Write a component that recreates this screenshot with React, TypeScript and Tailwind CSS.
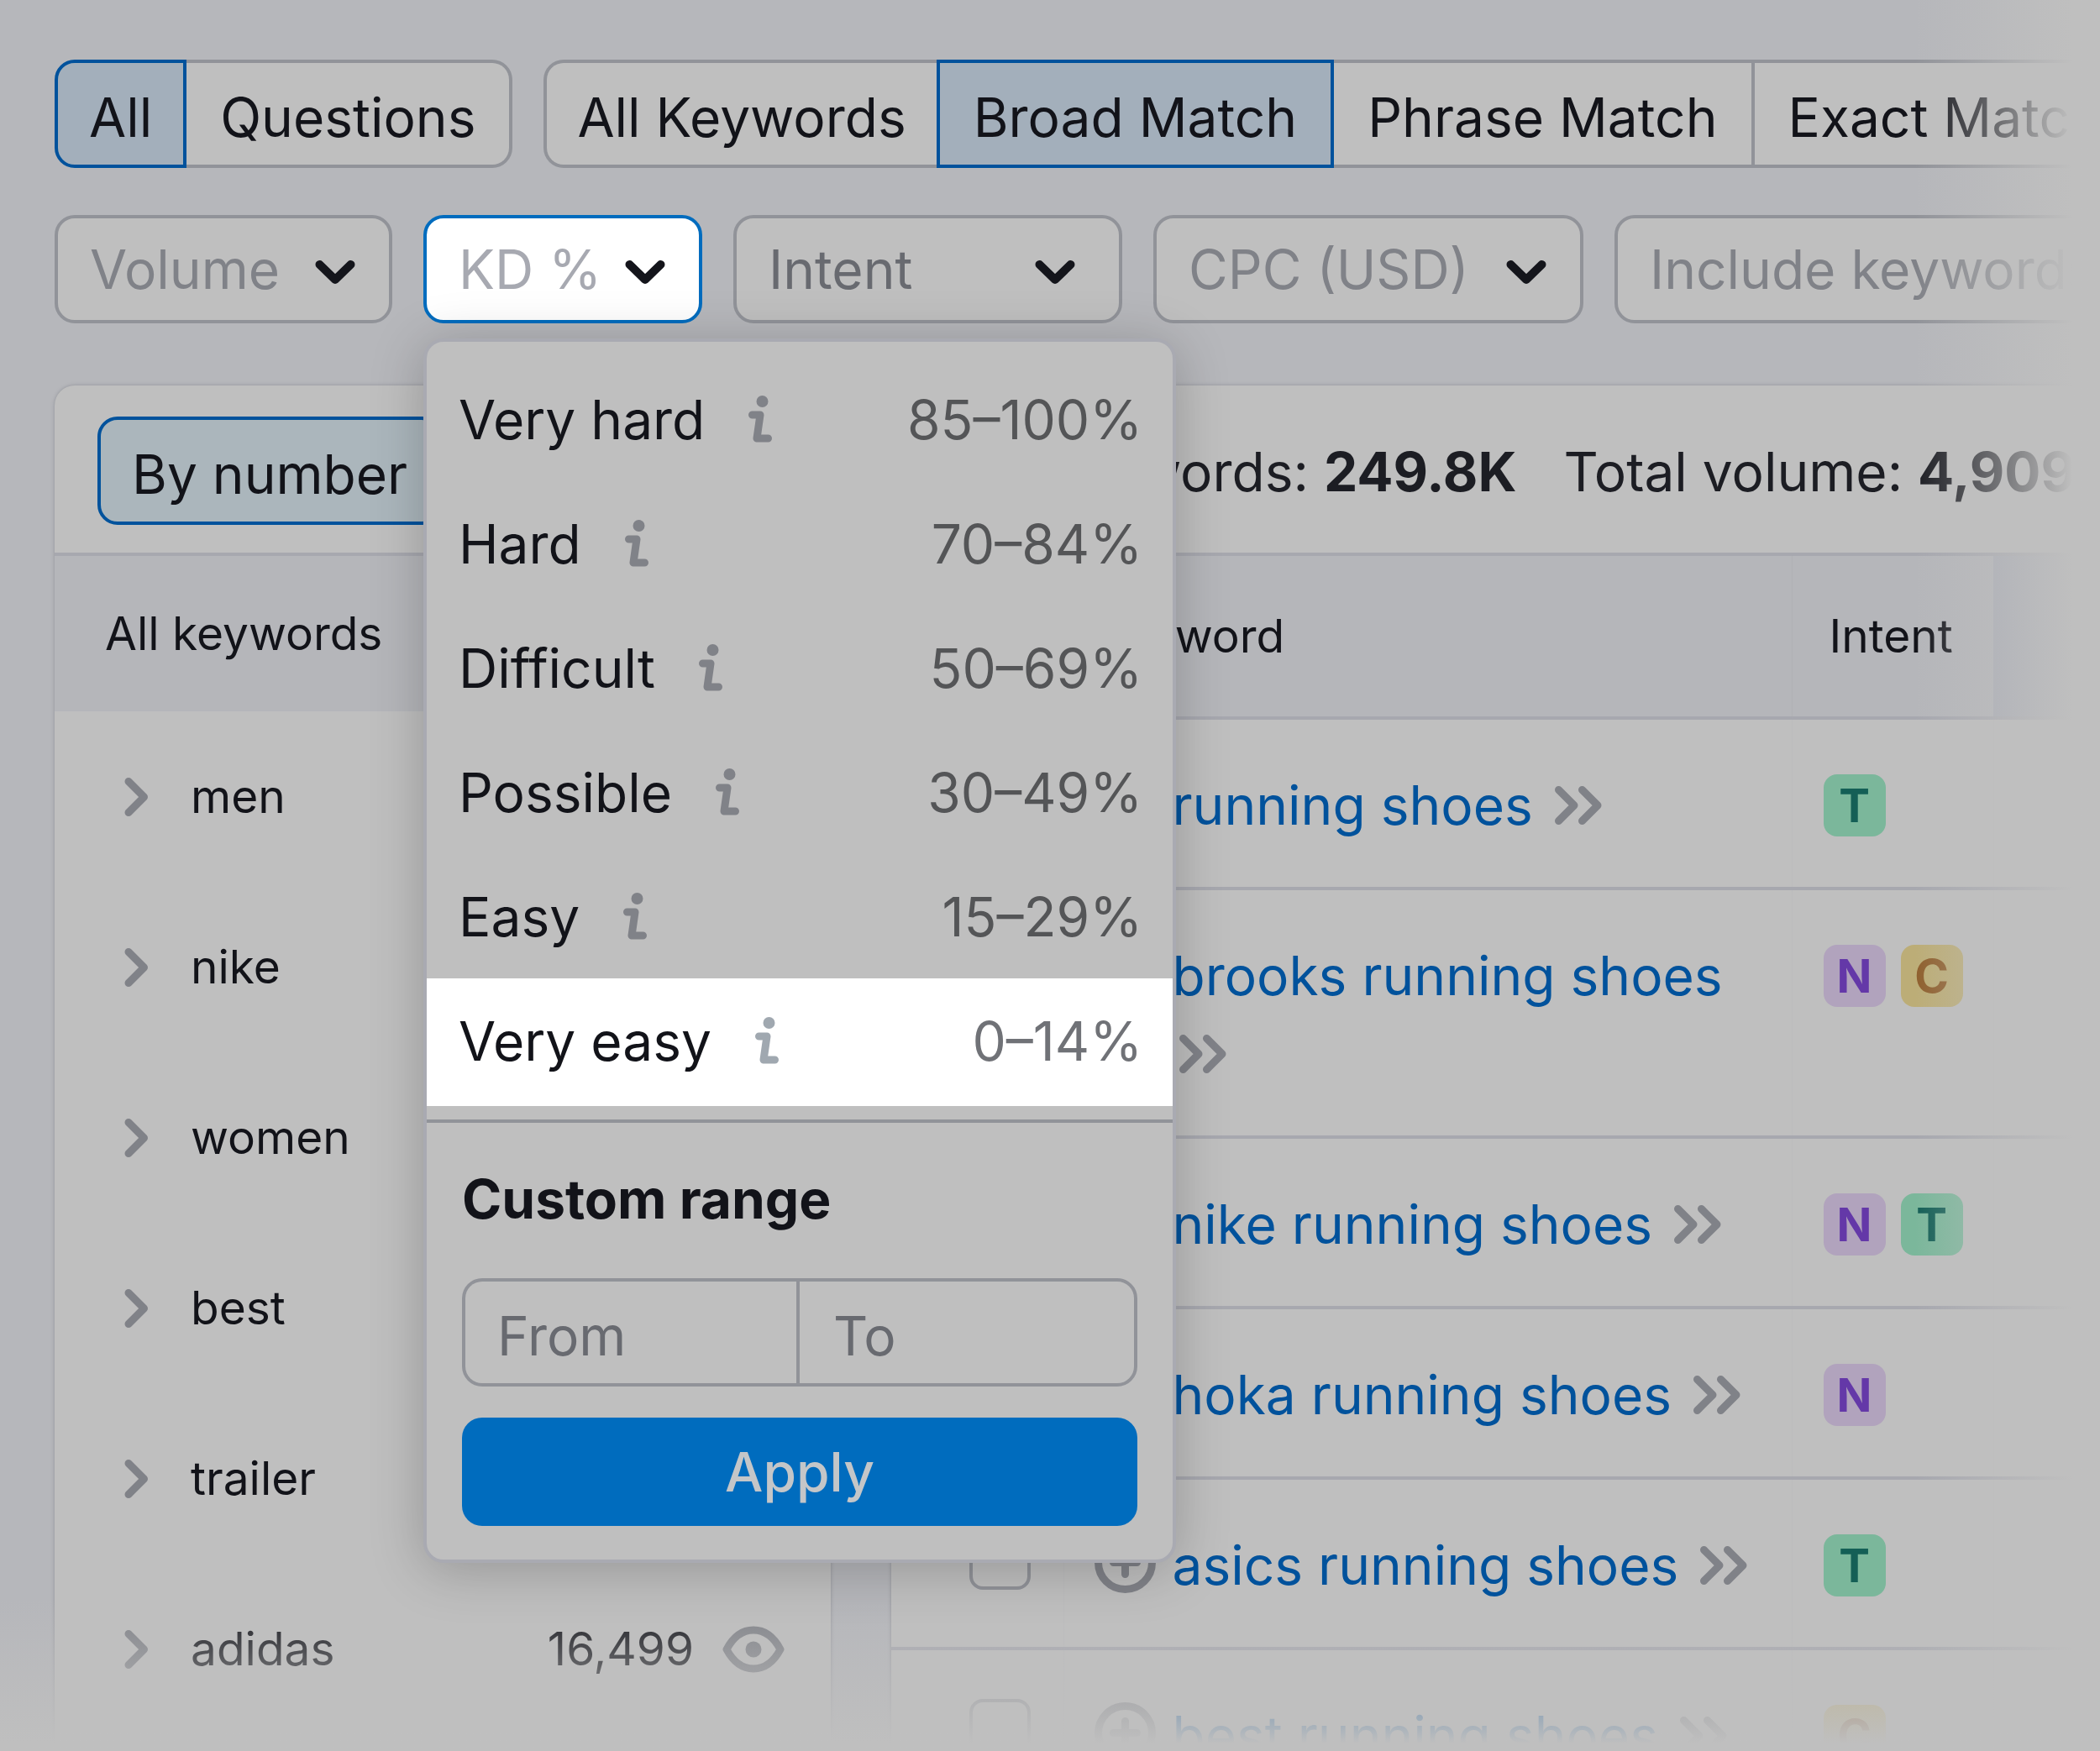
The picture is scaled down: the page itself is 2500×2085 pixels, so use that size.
import type { ReactNode } from "react";

const difficulties = [
  { label: "Very hard", range: "85–100%" },
  { label: "Hard", range: "70–84%" },
  { label: "Difficult", range: "50–69%" },
  { label: "Possible", range: "30–49%" },
  { label: "Easy", range: "15–29%" },
  { label: "Very easy", range: "0–14%", active: true },
];

const groups = [
  { name: "men" },
  { name: "nike" },
  { name: "women" },
  { name: "best" },
  { name: "trailer" },
  { name: "adidas", count: "16,499" },
];

const keywords = [
  { text: "running shoes", intents: ["T"] },
  { text: "brooks running shoes", intents: ["N", "C"] },
  { text: "nike running shoes", intents: ["N", "T"] },
  { text: "hoka running shoes", intents: ["N"] },
  { text: "asics running shoes", intents: ["T"] },
  { text: "best running shoes", intents: ["C"] },
];

const intentColors: Record<string, string> = {
  T: "bg-[#7bb79b] text-[#145f56]",
  N: "bg-[#b1a3bd] text-[#6438a8]",
  C: "bg-[#bcad77] text-[#8f602e]",
};

const ChevronDown = () => (
  <svg className="mt-1.5 w-12 h-7 shrink-0" viewBox="0 0 48 28" fill="none" stroke="#14151b" strokeWidth="10" strokeLinecap="round" strokeLinejoin="round">
    <path d="M5.500 5 24 23 42.500 5" />
  </svg>
);

const ChevronRight = () => (
  <svg className="w-7 h-12 shrink-0" viewBox="0 0 28 48" fill="none" stroke="#808288" strokeWidth="9" strokeLinecap="round" strokeLinejoin="round">
    <path d="M5 5.500 23.500 24 5 42.500" />
  </svg>
);

const DoubleChevron = () => (
  <svg className="ml-2 inline-block w-14 h-[46px] align-baseline" viewBox="0 0 56 46" fill="none" stroke="#808288" strokeWidth="9" strokeLinecap="round" strokeLinejoin="round">
    <path d="M4.500 4.500 23 23 4.500 41.500M32.500 4.500 51 23 32.500 41.500" />
  </svg>
);

const Info = () => (
  <svg className="w-7 h-14 shrink-0" viewBox="0 0 28 56">
    <circle cx="16.5" cy="7" r="7" fill="currentColor" />
    <path d="M4.500 23H14L10 51H23.500" fill="none" stroke="currentColor" strokeWidth="9" strokeLinecap="round" strokeLinejoin="round" />
  </svg>
);

const Eye = () => (
  <svg className="w-[74px] h-14 shrink-0" viewBox="0 0 74 56">
    <path d="M5 28C13 13 24 5 37 5S61 13 69 28C61 43 50 51 37 51S13 43 5 28Z" fill="none" stroke="#808288" strokeWidth="9" strokeLinejoin="round" />
    <circle cx="37" cy="28" r="9.500" fill="#808288" />
  </svg>
);

const PlusCircle = () => (
  <svg className="w-[73px] h-[73px] shrink-0" viewBox="0 0 73 73" fill="none" stroke="#808288" strokeWidth="9" strokeLinecap="round">
    <circle cx="36.5" cy="36.500" r="32" />
    <path d="M36.500 22.500v28M22.500 36.500h28" />
  </svg>
);

const Filter = ({ label, className }: { label: string; className: string }) => (
  <button className={`h-[129px] shrink-0 flex items-center justify-between rounded-3xl border-4 pl-[38px] whitespace-nowrap ${className}`}>
    {label}
    <ChevronDown />
  </button>
);

const Tab = ({ children, className }: { children: ReactNode; className: string }) => (
  <button className={`h-[129px] shrink-0 border-4 pt-2 whitespace-nowrap ${className}`}>{children}</button>
);

const KdPopup = () => (
  <div className="absolute left-0 top-full z-10 mt-[18px] w-[896px] rounded-3xl border-4 border-[#a9aab2] bg-[#bfbfbf] pt-[18px] pb-10 text-[#121319] shadow-[0_8px_64px_rgba(0,0,0,0.22)]">
    <ul>
      {difficulties.map((d) => (
        <li key={d.label}>
          <button
            className={`flex w-full items-center pl-[38px] pr-9 ${d.active ? "h-[152px] bg-white pb-1 text-[#a0a8b0]" : "h-[148px] text-[#808288]"}`}
          >
            <span className="text-[#121319]">{d.label}</span>
            <span className="ml-13">
              <Info />
            </span>
            <span className={`ml-auto ${d.active ? "text-[#707277]" : "text-[#545557]"}`}>{d.range}</span>
          </button>
        </li>
      ))}
    </ul>
    <div className="mt-4 border-t-4 border-[#919399] px-[42px] pt-11">
      <h2 className="font-bold">Custom range</h2>
      <div className="mt-12 flex">
        <input
          aria-label="From"
          placeholder="From"
          className="h-[129px] min-w-0 flex-1 rounded-l-3xl border-4 border-r-0 border-[#919399] px-[38px] pt-2 placeholder:text-[#686a70]"
        />
        <input
          aria-label="To"
          placeholder="To"
          className="h-[129px] min-w-0 flex-1 rounded-r-3xl border-4 border-[#919399] px-10 pt-2 placeholder:text-[#686a70]"
        />
      </div>
      <button className="mt-[37px] h-[129px] w-full rounded-3xl bg-[#006cbe] font-medium text-[#c4c6c8]">Apply</button>
    </div>
  </div>
);

const App = () => {
  return (
    <div className="relative h-screen overflow-hidden bg-[#b6b7bb] pl-[65px] pt-[71px] font-['Inter',sans-serif] text-[64px] leading-[93px] text-[#121319] [font-optical-sizing:none]">
      <div className="flex gap-[37px]">
        <div className="flex">
          <Tab className="rounded-l-3xl border-[#00529c] bg-[#a3afbb] px-[37px]">All</Tab>
          <Tab className="rounded-r-3xl border-l-0 border-[#919399] bg-[#bfbfbf] px-10">Questions</Tab>
        </div>
        <div className="flex">
          <Tab className="rounded-l-3xl border-r-0 border-[#919399] bg-[#bfbfbf] px-9">All Keywords</Tab>
          <Tab className="border-[#00529c] bg-[#a3afbb] px-10">Broad Match</Tab>
          <Tab className="border-l-0 border-[#919399] bg-[#bfbfbf] px-10">Phrase Match</Tab>
          <Tab className="rounded-r-3xl border-l-0 border-[#919399] bg-[#bfbfbf] px-10">Exact Match</Tab>
        </div>
      </div>

      <div className="mt-14 flex gap-[37px]">
        <Filter label="Volume" className="w-[402px] border-[#919399] bg-[#bfbfbf] pr-10 text-[#808288]" />
        <div className="relative shrink-0">
          <Filter label="KD %" className="w-[332px] border-[#006cbe] bg-white pr-10 text-[#a7a9b1]" />
          <KdPopup />
        </div>
        <Filter label="Intent" className="w-[463px] border-[#919399] bg-[#bfbfbf] pr-13 text-[#686a70]" />
        <Filter label="CPC (USD)" className="w-[512px] border-[#919399] bg-[#bfbfbf] pr-10 text-[#808288]" />
        <input
          aria-label="Include keywords"
          placeholder="Include keywords"
          className="h-[129px] w-[800px] shrink-0 rounded-3xl border-4 border-[#919399] bg-[#bfbfbf] px-[38px] placeholder:text-[#808288]"
        />
      </div>

      <div className="mt-[74px] flex gap-[72px]">
        <aside className="w-[924px] shrink-0 overflow-hidden rounded-t-3xl bg-[#bfbfbf] shadow-[0_0_4px_#8f9198]">
          <div className="flex h-[203px] border-b-4 border-[#a7a8af] px-[51px] pt-[37px]">
            <button className="h-[129px] rounded-3xl border-4 border-[#00529c] bg-[#abb6bc] px-[37px] pt-2">By number</button>
          </div>
          <div className="flex h-[185px] items-center bg-[#b5b6ba] px-15 text-[55px]">All keywords</div>
          <ul className="text-[55px]">
            {groups.map((g) => (
              <li key={g.name} className="flex h-[203px] items-center pl-[83px] pr-[55px]">
                <ChevronRight />
                <span className="ml-[51px]">{g.name}</span>
                <span className="ml-auto mr-[34px]">{g.count}</span>
                <Eye />
              </li>
            ))}
          </ul>
        </aside>

        <main className="min-w-0 flex-1 rounded-tl-3xl bg-[#bfbfbf] shadow-[0_0_4px_#8f9198]">
          <div className="flex h-[199px] items-center gap-14 overflow-hidden whitespace-nowrap pl-[94px] pt-1.5 text-[#1c1d23]">
            <p>
              All keywords: <b>249.8K</b>
            </p>
            <p>
              Total volume: <b>4,909,110</b>
            </p>
          </div>
          <table className="w-full table-fixed border-collapse">
            <colgroup>
              <col className="w-[205px]" />
              <col className="w-[867px]" />
              <col className="w-[240px]" />
              <col />
            </colgroup>
            <thead>
              <tr className="h-[195px] border-y-4 border-[#a7a8af] bg-[#b5b6ba] text-left text-[55px]">
                <th />
                <th className="pl-9 font-normal">Keyword</th>
                <th className="border-l border-[#b0b1b5] pl-11 font-normal">Intent</th>
                <th className="bg-[#a8abb5]" />
              </tr>
            </thead>
            <tbody>
              {keywords.map((k) => (
                <tr key={k.text} className="border-b-4 border-[#a7a8af] align-top">
                  <td className="pl-[93px] pt-[58px]">
                    <input
                      type="checkbox"
                      aria-label={k.text}
                      className="block h-[73px] w-[73px] appearance-none rounded-2xl border-4 border-[#919399]"
                    />
                  </td>
                  <td className="border-l border-[#bbbbbd] pt-[55px] pb-[51px] pl-9 pr-6">
                    <div className="flex gap-5">
                      <button aria-label="Add" className="mt-[7px] h-[73px] shrink-0">
                        <PlusCircle />
                      </button>
                      <p>
                        <a href="#" className="text-[#00529c]">
                          {k.text}
                        </a>{" "}
                        <DoubleChevron />
                      </p>
                    </div>
                  </td>
                  <td className="border-l border-[#bbbbbd] pl-[37px] pt-[65px]">
                    <div className="flex gap-[18px]">
                      {k.intents.map((i) => (
                        <span
                          key={i}
                          className={`flex h-[74px] w-[74px] items-center justify-center rounded-2xl text-[55px] font-bold ${intentColors[i]}`}
                        >
                          {i}
                        </span>
                      ))}
                    </div>
                  </td>
                  <td className="border-l border-[#bbbbbd]" />
                </tr>
              ))}
            </tbody>
          </table>
        </main>
      </div>

      <div className="pointer-events-none absolute inset-y-0 right-0 w-[220px] bg-linear-to-r from-[#bfbfbf]/0 to-[#bfbfbf] to-85%" />
      <div className="pointer-events-none absolute inset-x-0 bottom-0 h-[180px] bg-linear-to-b from-[#bfbfbf]/0 to-[#bfbfbf] to-95%" />
    </div>
  );
};

export default App;
